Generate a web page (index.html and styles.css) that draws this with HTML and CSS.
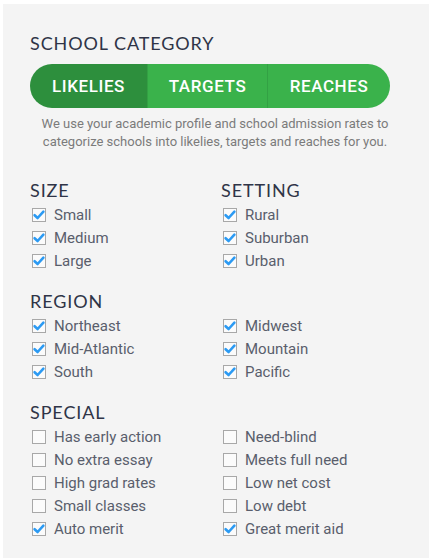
FILE: index.html
```html
<!DOCTYPE html>
<html lang="en">
<head>
  <meta charset="UTF-8" />
  <title>School filters</title>
  <link rel="stylesheet" href="styles.css">
</head>
<body>
  <div class="panel">
    <h2 class="title">SCHOOL CATEGORY</h2>
    <div class="segments">
      <button class="seg active">LIKELIES</button>
      <button class="seg">TARGETS</button>
      <button class="seg">REACHES</button>
    </div>
    <p class="note">We use your academic profile and school admission rates to categorize schools into likelies, targets and reaches for you.</p>

    <div class="section">
      <div class="heads"><h3>SIZE</h3><h3>SETTING</h3></div>
      <div class="cols">
        <ul>
          <li><span class="box on"></span>Small</li>
          <li><span class="box on"></span>Medium</li>
          <li><span class="box on"></span>Large</li>
        </ul>
        <ul>
          <li><span class="box on"></span>Rural</li>
          <li><span class="box on"></span>Suburban</li>
          <li><span class="box on"></span>Urban</li>
        </ul>
      </div>
    </div>

    <div class="section">
      <div class="heads"><h3>REGION</h3></div>
      <div class="cols">
        <ul>
          <li><span class="box on"></span>Northeast</li>
          <li><span class="box on"></span>Mid-Atlantic</li>
          <li><span class="box on"></span>South</li>
        </ul>
        <ul>
          <li><span class="box on"></span>Midwest</li>
          <li><span class="box on"></span>Mountain</li>
          <li><span class="box on"></span>Pacific</li>
        </ul>
      </div>
    </div>

    <div class="section">
      <div class="heads"><h3>SPECIAL</h3></div>
      <div class="cols">
        <ul>
          <li><span class="box"></span>Has early action</li>
          <li><span class="box"></span>No extra essay</li>
          <li><span class="box"></span>High grad rates</li>
          <li><span class="box"></span>Small classes</li>
          <li><span class="box on"></span>Auto merit</li>
        </ul>
        <ul>
          <li><span class="box"></span>Need-blind</li>
          <li><span class="box"></span>Meets full need</li>
          <li><span class="box"></span>Low net cost</li>
          <li><span class="box"></span>Low debt</li>
          <li><span class="box on"></span>Great merit aid</li>
        </ul>
      </div>
    </div>
  </div>

  <script>
    // tick mark for checked boxes
    const tick = '<svg viewBox="0 0 14 14" width="14" height="14"><path d="M2.6 7.2 L5.6 10 L11.4 3.6" fill="none" stroke="#2b9af3" stroke-width="2.6" stroke-linecap="round" stroke-linejoin="round"/></svg>';
    document.querySelectorAll('.box.on').forEach(box => {
      box.innerHTML = tick;
    });

    document.querySelectorAll('.box').forEach(box => {
      box.parentNode.addEventListener('click', () => {
        box.classList.toggle('on');
        box.innerHTML = box.classList.contains('on') ? tick : '';
      });
    });

    document.querySelectorAll('.seg').forEach(seg => {
      seg.addEventListener('click', () => {
        document.querySelectorAll('.seg').forEach(s => s.classList.remove('active'));
        seg.classList.add('active');
      });
    });
  </script>
</body>
</html>
```

FILE: styles.css
```css
body {
  margin: 0;
  background: #fff;
  font-family: Roboto, "Liberation Sans", sans-serif;
}
.panel {
  margin: 4px 4px 0 3px;
  min-height: 554px;
  background: #f4f4f4;
  padding: 29px 0 0 27px;
  box-sizing: border-box;
}
.title, h3 {
  margin: 0;
  font-family: Lato, "Open Sans", sans-serif;
  font-weight: 400;
  font-size: 18px;
  letter-spacing: 0.9px;
  color: #2f3447;
  line-height: 20px;
}
.segments {
  display: grid;
  grid-template-columns: 117px 120px 123px;
  width: 360px;
  height: 44px;
  margin-top: 11px;
  border-radius: 22px;
  overflow: hidden;
}
.seg {
  border: none;
  background: #3ab24b;
  color: #fff;
  font-family: Roboto, sans-serif;
  font-weight: 500;
  font-size: 17px;
  letter-spacing: 0.6px;
  padding: 0;
  cursor: pointer;
}
.seg + .seg {
  border-left: 1px solid #33a144;
}
.seg.active {
  background: #2d8f3d;
}
.note {
  width: 362px;
  margin: 7px 0 0 4px;
  text-align: center;
  font-size: 13px;
  line-height: 18px;
  color: #7b7b7b;
}
.section {
  margin-top: 29px;
}
.section + .section {
  margin-top: 19px;
}
.heads, .cols {
  display: grid;
  grid-template-columns: 191px 1fr;
}
ul {
  list-style: none;
  margin: 3px 0 0;
  padding: 0 0 0 2px;
}
li {
  display: flex;
  align-items: center;
  gap: 8px;
  height: 23px;
  font-size: 15px;
  color: #595e6c;
  cursor: pointer;
}
.box {
  width: 14px;
  height: 14px;
  border: 1px solid #a8a8a8;
  background: #fbfbfb;
  box-sizing: border-box;
  display: flex;
  align-items: center;
  justify-content: center;
}
.box svg {
  flex: none;
}
```
